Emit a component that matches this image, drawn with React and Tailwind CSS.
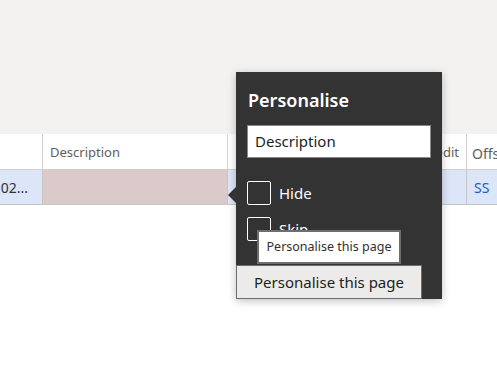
export default function App() {
  return (
    <div
      className="relative w-[497px] h-[376px] overflow-hidden bg-white"
      style={{ fontFamily: '"Noto Sans", "Open Sans", sans-serif' }}
    >
      <div className="h-[134px] bg-[#f3f2f1]"></div>

      {/* table */}
      <div className="flex h-[36px] border-b border-[#d2d0ce] text-[13px] text-[#605e5c]">
        <div className="w-[43px] border-r border-[#d2d0ce]"></div>
        <div className="w-[185px] border-r border-[#d2d0ce] flex items-center pl-[7px] pt-[3px]">Description</div>
        <div className="w-[239px] border-r border-[#d2d0ce] flex items-center justify-end pr-[7px] pt-[3px]">Credit</div>
        <div className="flex-1 flex items-center pl-[5px] pt-[3px] text-[14px] whitespace-nowrap overflow-hidden">Offset</div>
      </div>
      <div className="flex h-[35px] border-b border-[#c8c6c4] bg-[#dce6f8] text-[14px]">
        <div className="w-[43px] border-r border-[#c8c6c4] flex items-center justify-end pr-[14px] text-[#323130] overflow-hidden whitespace-nowrap">02...</div>
        <div className="w-[185px] border-r border-[#c8c6c4] bg-[#dccaca]"></div>
        <div className="w-[239px] border-r border-[#c8c6c4]"></div>
        <div className="flex-1 flex items-center pl-[7px] text-[#1b5fc1]">SS</div>
      </div>

      {/* personalise panel */}
      <div className="absolute left-[236px] top-[72px] w-[206px] h-[227px] bg-[#333333] shadow-[0_2px_8px_rgba(0,0,0,0.25)]">
        <div className="absolute left-[-8px] top-[115px] w-0 h-0 border-y-[8px] border-y-transparent border-r-[8px] border-r-[#333333]"></div>
        <div className="pl-[12px] pt-[16px] text-white text-[18px] font-semibold leading-[24px]">Personalise</div>
        <div className="mx-[11px] mt-[13px] h-[33px] bg-white border border-[#8a8886] flex items-center pl-[7px] text-[15px] text-[#201f1e]">
          Description
        </div>
        <div className="mt-[23px] pl-[11px] flex flex-col gap-[12px]">
          <div className="flex items-center gap-[8px]">
            <div className="w-[24px] h-[24px] border border-white rounded-[2px]"></div>
            <span className="text-white text-[15px]">Hide</span>
          </div>
          <div className="flex items-center gap-[8px]">
            <div className="w-[24px] h-[24px] border border-white rounded-[2px]"></div>
            <span className="text-white text-[15px]">Skip</span>
          </div>
        </div>
        <div className="absolute left-[21px] top-[158px] w-[144px] h-[34px] bg-white border-2 border-[#6e6e6e] flex items-center justify-center text-[12.5px] text-[#323130] whitespace-nowrap">
          Personalise this page
        </div>
        <button className="absolute left-0 top-[193px] w-[186px] h-[34px] bg-[#edebe9] border border-[#6e6e6e] text-[15px] text-[#201f1e] flex items-center justify-center">
          Personalise this page
        </button>
      </div>
    </div>
  );
}
